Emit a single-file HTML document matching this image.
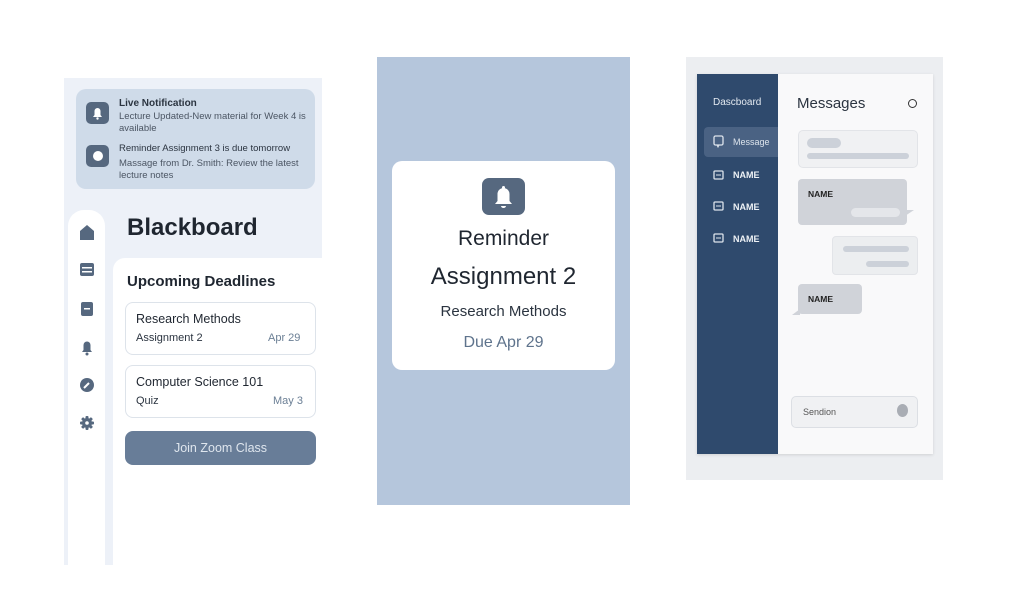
<!DOCTYPE html>
<html><head><meta charset="utf-8"><style>
*{box-sizing:border-box;margin:0;padding:0}
body{width:1009px;height:615px;background:#fff;position:relative;overflow:hidden;font-family:"Liberation Sans",sans-serif;color:#1f2630}
.a{position:absolute}
.ic{background:#56687f;border-radius:4px}
.card{background:#fff;border:1px solid #dde3ea;border-radius:8px}
.bar{background:#ccd1d9;border-radius:5px;position:absolute}
</style></head><body>
<!-- LEFT PANEL -->
<div class="a" style="left:64px;top:78px;width:258px;height:487px;background:#edf1f8"></div>
<div class="a" style="left:76px;top:89px;width:239px;height:100px;background:#cfdbe9;border-radius:10px"></div>
<div class="a ic" style="left:86px;top:102px;width:23px;height:22px;border-radius:5px"><svg width="23" height="22" viewBox="0 0 23 22"><path d="M7 15h9l-1.5-2v-4a3 3 0 0 0-6 0v4z" fill="#fff"/><circle cx="11.5" cy="16.5" r="1.2" fill="#fff"/></svg></div>
<div class="a" style="left:119px;top:98px;font-size:10px;font-weight:bold;color:#2b3440">Live Notification</div>
<div class="a" style="left:119px;top:111px;font-size:9.5px;line-height:12px;color:#4b5563;width:195px">Lecture Updated-New material for Week 4 is available</div>
<div class="a ic" style="left:86px;top:145px;width:23px;height:22px;border-radius:5px"><div class="a" style="left:7px;top:6px;width:10px;height:10px;background:#fff;border-radius:50%"></div></div>
<div class="a" style="left:119px;top:143px;font-size:9.5px;color:#2b3440">Reminder Assignment 3 is due tomorrow</div>
<div class="a" style="left:119px;top:158px;font-size:9.5px;line-height:12px;color:#4b5563;width:195px">Massage from Dr. Smith: Review the latest lecture notes</div>
<div class="a" style="left:68px;top:210px;width:37px;height:355px;background:#fff;border-radius:16px 16px 0 0"></div>
<svg class="a" style="left:78px;top:223px" width="18" height="210" viewBox="0 0 18 210">
<path d="M2 8l7-6 7 6v9H2z" fill="#56687f"/>
<rect x="2" y="40" width="14" height="13" rx="2" fill="#56687f"/><rect x="4" y="44" width="10" height="1.5" fill="#fff"/><rect x="4" y="48" width="10" height="1.5" fill="#fff"/>
<rect x="3" y="79" width="12" height="14" rx="2" fill="#56687f"/><rect x="6" y="85" width="6" height="1.5" fill="#fff"/>
<path d="M4 129h10l-1.5-2v-5a3.5 3.5 0 0 0-7 0v5z" fill="#56687f"/><circle cx="9" cy="131" r="1.5" fill="#56687f"/>
<circle cx="9" cy="162" r="7" fill="#56687f"/><path d="M6 165l5-5" stroke="#fff" stroke-width="2"/>
<g fill="#56687f"><circle cx="9" cy="200" r="5"/><rect x="7.5" y="193" width="3" height="14" rx="1"/><rect x="2" y="198.5" width="14" height="3" rx="1"/><rect x="7.5" y="193" width="3" height="14" rx="1" transform="rotate(45 9 200)"/><rect x="7.5" y="193" width="3" height="14" rx="1" transform="rotate(-45 9 200)"/></g><circle cx="9" cy="200" r="1.8" fill="#fff"/>
</svg>
<div class="a" style="left:127px;top:214px;font-size:24px;font-weight:bold;color:#1f2630">Blackboard</div>
<div class="a" style="left:113px;top:258px;width:209px;height:307px;background:#fff;border-radius:12px 0 0 0"></div>
<div class="a" style="left:127px;top:273px;font-size:15px;font-weight:bold;color:#1f2630">Upcoming Deadlines</div>
<div class="a card" style="left:125px;top:302px;width:191px;height:53px"></div>
<div class="a" style="left:136px;top:312px;font-size:12.5px;color:#1f2630">Research Methods</div>
<div class="a" style="left:136px;top:332px;font-size:11px;color:#2b3440">Assignment 2</div>
<div class="a" style="left:268px;top:332px;font-size:11px;color:#6b7f95">Apr 29</div>
<div class="a card" style="left:125px;top:365px;width:191px;height:53px"></div>
<div class="a" style="left:136px;top:375px;font-size:12.5px;color:#1f2630">Computer Science 101</div>
<div class="a" style="left:136px;top:395px;font-size:11px;color:#2b3440">Quiz</div>
<div class="a" style="left:273px;top:395px;font-size:11px;color:#6b7f95">May 3</div>
<div class="a" style="left:125px;top:431px;width:191px;height:34px;background:#687d98;border-radius:8px;color:#dfe6ee;font-size:12.5px;text-align:center;line-height:34px">Join Zoom Class</div>
<!-- MIDDLE -->
<div class="a" style="left:377px;top:57px;width:253px;height:448px;background:#b5c6dc"></div>
<div class="a" style="left:392px;top:161px;width:223px;height:209px;background:#fff;border-radius:10px"></div>
<div class="a ic" style="left:482px;top:178px;width:43px;height:37px;border-radius:7px"><svg width="43" height="37" viewBox="0 0 43 37"><path d="M13 26h17l-2.5-3v-7a6 6 0 0 0-12 0v7z" fill="#fff"/><rect x="20" y="8" width="3" height="3" rx="1.5" fill="#fff"/><path d="M19 28a2.5 2 0 0 0 5 0z" fill="#fff"/></svg></div>
<div class="a" style="left:392px;top:227px;width:223px;text-align:center;font-size:21px;color:#1f2630">Reminder</div>
<div class="a" style="left:392px;top:263px;width:223px;text-align:center;font-size:24px;color:#1f2630">Assignment 2</div>
<div class="a" style="left:392px;top:303px;width:223px;text-align:center;font-size:15px;color:#2b3440">Research Methods</div>
<div class="a" style="left:392px;top:334px;width:223px;text-align:center;font-size:16px;color:#5e738c">Due Apr 29</div>
<!-- RIGHT -->
<div class="a" style="left:686px;top:57px;width:257px;height:423px;background:#eceef1"></div>
<div class="a" style="left:697px;top:74px;width:236px;height:380px;background:#f9f9fa;box-shadow:0 1px 3px rgba(0,0,0,.12)"></div>
<div class="a" style="left:697px;top:74px;width:81px;height:380px;background:#2f4a6d"></div>
<div class="a" style="left:713px;top:97px;font-size:10px;color:#e3e9f0">Dascboard</div>
<div class="a" style="left:704px;top:127px;width:74px;height:30px;background:#4a6283;border-radius:4px 0 0 4px"></div>
<svg class="a" style="left:713px;top:135px" width="12" height="13"><rect x="1" y="1" width="9" height="9" rx="1.5" fill="none" stroke="#dde4ec" stroke-width="1.3"/><path d="M4 10l1 2 1-2" fill="none" stroke="#dde4ec"/></svg>
<div class="a" style="left:733px;top:137px;font-size:9px;color:#dde4ec">Message</div>
<svg class="a" style="left:713px;top:170px" width="11" height="80"><g fill="none" stroke="#dde4ec" stroke-width="1.3"><rect x="1" y="1" width="9" height="8" rx="1"/><rect x="1" y="32" width="9" height="8" rx="1"/><rect x="1" y="64" width="9" height="8" rx="1"/></g><path d="M3 5h5M3 36h5M3 68h5" stroke="#dde4ec"/></svg>
<div class="a" style="left:733px;top:170px;font-size:9px;font-weight:bold;color:#eef2f6">NAME</div>
<div class="a" style="left:733px;top:202px;font-size:9px;font-weight:bold;color:#eef2f6">NAME</div>
<div class="a" style="left:733px;top:234px;font-size:9px;font-weight:bold;color:#eef2f6">NAME</div>
<div class="a" style="left:797px;top:95px;font-size:15px;color:#2b3440">Messages</div>
<div class="a" style="left:908px;top:99px;width:9px;height:9px;border:1.5px solid #333;border-radius:50%"></div>
<div class="a" style="left:798px;top:130px;width:120px;height:38px;background:#f0f1f3;border:1px solid #e2e4e8;border-radius:5px"></div>
<div class="bar" style="left:807px;top:138px;width:34px;height:10px"></div>
<div class="bar" style="left:807px;top:153px;width:102px;height:6px"></div>
<div class="a" style="left:798px;top:179px;width:109px;height:46px;background:#d0d3d9;border-radius:4px"></div>
<div class="a" style="left:905px;top:210px;width:0;height:0;border-left:9px solid #d0d3d9;border-bottom:6px solid transparent"></div>
<div class="a" style="left:808px;top:189px;font-size:8.5px;font-weight:bold;color:#222">NAME</div>
<div class="a" style="left:851px;top:208px;width:49px;height:9px;background:#e4e6ea;border-radius:5px"></div>
<div class="a" style="left:832px;top:236px;width:86px;height:39px;background:#eceef0;border:1px solid #e2e4e8;border-radius:4px"></div>
<div class="bar" style="left:843px;top:246px;width:66px;height:6px"></div>
<div class="bar" style="left:866px;top:261px;width:43px;height:6px"></div>
<div class="a" style="left:798px;top:284px;width:64px;height:30px;background:#d0d3d9;border-radius:4px"></div>
<div class="a" style="left:792px;top:309px;width:0;height:0;border-right:8px solid #d0d3d9;border-top:6px solid transparent"></div>
<div class="a" style="left:808px;top:294px;font-size:8.5px;font-weight:bold;color:#222">NAME</div>
<div class="a" style="left:791px;top:396px;width:127px;height:32px;background:#f0f1f3;border:1px solid #dcdfe4;border-radius:5px"></div>
<div class="a" style="left:803px;top:407px;font-size:9px;color:#555">Sendion</div>
<div class="a" style="left:897px;top:404px;width:11px;height:13px;background:#a9adb4;border-radius:50%"></div>
</body></html>
